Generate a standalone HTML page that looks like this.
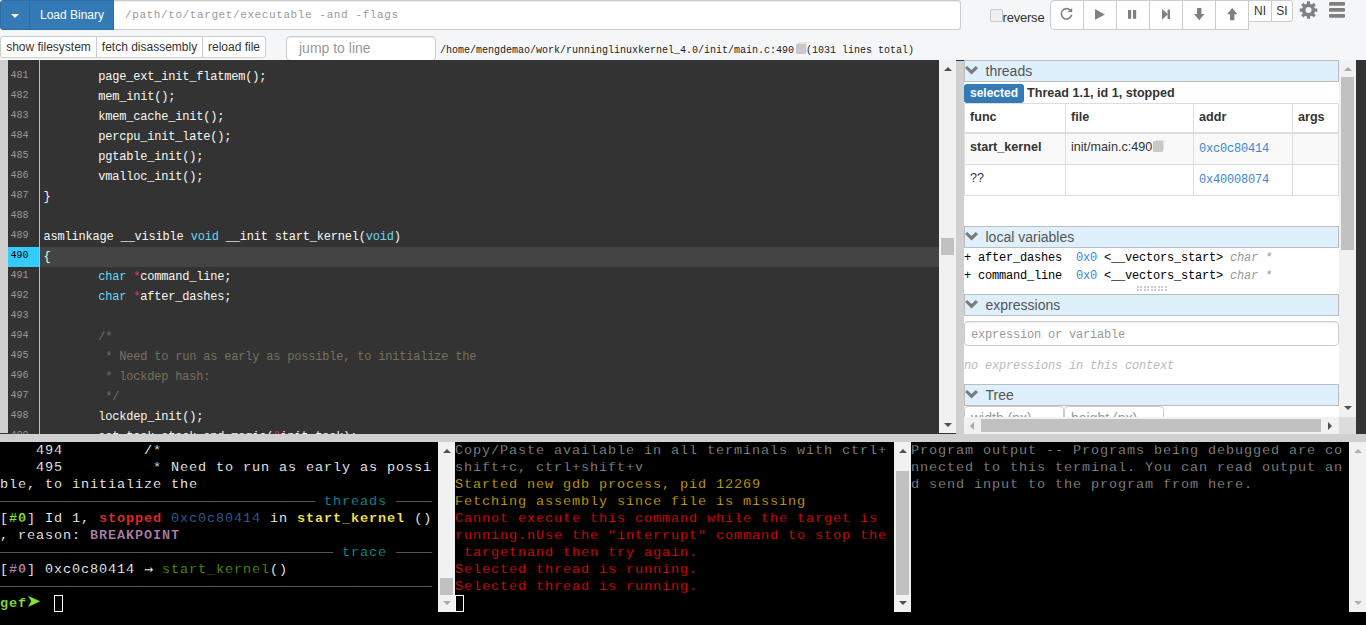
<!DOCTYPE html>
<html><head><meta charset="utf-8"><title>gdbgui</title>
<style>
*{box-sizing:border-box;margin:0;padding:0}
html,body{width:1366px;height:625px;overflow:hidden}
body{background:#f5f6f7;font-family:"Liberation Sans",sans-serif;font-size:14px;color:#333;position:relative}
.abs{position:absolute}
.mono{font-family:"Liberation Mono",monospace}
.btn{position:absolute;background:#fff;border:1px solid #ccc;color:#333;font-size:12px;text-align:center;white-space:nowrap}
/* top bar */
#ddl{left:0;top:0;width:30px;height:30px;background:#337ab7;border:1px solid #2e6da4;border-radius:3px 0 0 3px}
#ddl i{position:absolute;left:10px;top:13px;border-left:4px solid transparent;border-right:4px solid transparent;border-top:4px solid #fff}
#load{left:29px;top:0;width:85px;height:30px;background:#337ab7;border:1px solid #2e6da4;color:#fff;font-size:12px;line-height:28px;text-align:center;padding-left:1px}
#binput{left:114px;top:0;width:847px;height:30px;background:#fff;border:1px solid #ccc;border-left:0;border-radius:0 3px 3px 0;box-shadow:inset 0 1px 1px rgba(0,0,0,.075);font-size:11px;letter-spacing:0.6px;line-height:29px;padding-left:11px;color:#9a9a9a}
#rev{left:1002.5px;top:10px;font-size:13px;line-height:16px;color:#333;letter-spacing:-0.2px}
#chk{left:990px;top:9px;width:13px;height:13px;border:1px solid #c8c8c8;border-radius:2px;background:#f0f0f0}
.cb{top:0;height:30px;width:34px;border-radius:0}
.cb svg{position:absolute;left:0;top:0}
.xs{top:0;height:22px;line-height:20px;font-size:12px}
/* row 2 */
.b2{top:36px;height:22px;line-height:20px}
#jump{left:286px;top:36px;width:150px;height:25px;background:#fff;border:1px solid #ccc;border-radius:4px;box-shadow:inset 0 1px 1px rgba(0,0,0,.075);font-size:14px;line-height:23px;padding-left:12px;color:#999}
#path{left:440px;top:43px;font-size:10px;line-height:16px;color:#222;white-space:pre}
/* code */
#code{left:0;top:60px;width:1366px;height:373.5px;background:#333;overflow:hidden}
#lstrip{left:0;top:0;width:8px;height:373px;background:#d0d0d0}
.row{position:absolute;left:8px;width:931px;height:20px}
.row.cur{background:#444}
.ln{position:absolute;left:0;top:0;width:32px;height:20px;font-size:10px;color:#999;line-height:18.6px;padding-left:2.5px;border-right:1px solid #bbb}
.cur .ln{background:#3cf;color:#000}
.cl{position:absolute;left:35.6px;top:0.4px;height:20px;line-height:20px;font-size:12px;letter-spacing:-0.2px;color:#f8f8f2;white-space:pre}
.tab{letter-spacing:-0.38px}
.k{color:#66d9ef}.o{color:#f92672}.c{color:#75715e}
/* scrollbars */
.sb{position:absolute;background:#f1f1f1}
.thumb{position:absolute;background:#c1c1c1}
.arr{position:absolute;width:0;height:0;border:4px solid transparent}
.arr.u{border-bottom:4px solid #505050;border-top:0}
.arr.d{border-top:4px solid #505050;border-bottom:0}
.arr.l{border-right:4px solid #505050;border-left:0}
.arr.r{border-left:4px solid #505050;border-right:0}
/* right panel */
#gut1{left:956px;top:61px;width:8px;height:372.5px;background:#d0d0d0}
#panel{left:964px;top:60px;width:375px;height:357px;background:#fff;overflow:hidden}
.hdr{position:absolute;left:0;width:375px;height:22px;background:#dff0fd;border:1px solid #bcbcbc;font-size:14px;line-height:20px;color:#555;padding-left:20.5px}
.hdr svg{position:absolute;left:0;top:4.5px}
#sel{left:0;top:24px;width:60px;height:19px;background:#337ab7;color:#fff;font-weight:bold;font-size:12px;line-height:19px;text-align:center;border-radius:3px}
#thr{left:63px;top:23px;font-weight:bold;font-size:12.6px;line-height:20px;color:#333}
table{position:absolute;left:0;top:43px;width:375px;border-collapse:collapse;font-size:12.6px}
td,th{border:1px solid #ddd;padding:3.5px 5px 5px;line-height:18px;text-align:left;vertical-align:top;height:31px;white-space:nowrap}
th{border-bottom:2px solid #ddd;height:29px}
tr.odd td{height:32px;padding-top:4px}
tr.odd td{background:#f9f9f9}
.addr{position:relative;top:1px;font-family:"Liberation Mono",monospace;font-size:12px;letter-spacing:-0.2px;color:#3a86d0}
.lv{position:absolute;left:0;font-family:"Liberation Mono",monospace;font-size:12px;letter-spacing:-0.2px;line-height:18px;color:#000;white-space:pre}
.lv b{font-weight:normal;color:#3a86d0}
.lv i{color:#999}
#expr{left:0;top:261px;width:375px;height:25px;border:1px solid #ccc;border-radius:4px;box-shadow:inset 0 1px 1px rgba(0,0,0,.075);font-size:12px;line-height:26px;padding-left:6px;color:#999;letter-spacing:-0.2px}
#noexp{left:0;top:297px;font-size:12px;letter-spacing:-0.2px;font-style:italic;color:#bbb;line-height:18px;white-space:pre}
.tin{position:absolute;top:346px;height:25px;width:100px;border:1px solid #ccc;border-radius:4px;font-size:14px;color:#999;padding-left:6px;line-height:23px;background:#fff}
/* terminals */
#gut2{left:0;top:433.5px;width:1366px;height:8.5px;background:#d0d0d0}
.term{position:absolute;top:442px;height:183px;background:#000;font-family:"Liberation Mono",monospace;font-size:13.5px;letter-spacing:0.9px;line-height:17px;color:#fff;overflow:hidden;-webkit-text-stroke:0.25px #000}
.term div{height:17px;white-space:pre}
.g{color:#9c9c9c}.y{color:#e6bc00}.r{color:#ff0a0a}
.ln2{color:#555753;position:relative;top:1px;-webkit-text-stroke:0;font-size:15px;letter-spacing:0;line-height:17px;vertical-align:top;display:inline-block;height:17px}.cy{color:#06989a}.bg{color:#8ae234}.br{color:#ef2929}.bl{color:#3465a4}.by{color:#fce94f}.bm{color:#ad7fa8}.mg{color:#75507b}.gr{color:#4e9a06}
.cur2{display:inline-block;width:9px;height:17px;border:1px solid #fff;vertical-align:top}
.cp{display:inline-block;position:relative;width:11px;height:12px;vertical-align:-1px;margin-left:1px}.cp:before{content:'';position:absolute;left:2px;top:0;width:9px;height:10.5px;background:#dedede;border-radius:1px}.cp i{position:absolute;left:0;top:1.5px;width:9.5px;height:10.5px;background:#c9c9c9;border-radius:1px}
.arw{position:absolute;left:26px;top:-3px;font-family:"DejaVu Sans",sans-serif;font-size:18px;line-height:17px;color:#8ae234;font-weight:normal}
.dj{font-family:"DejaVu Sans Mono",monospace;font-size:15px;display:inline-block;width:9px;line-height:17px;vertical-align:top;height:17px;overflow:visible}
.lt{-webkit-text-stroke:0.15px #000}
</style></head><body>
<!-- top bar -->
<div id="ddl" class="abs"><i></i></div>
<div id="load" class="abs">Load Binary</div>
<div id="binput" class="abs mono">/path/to/target/executable -and -flags</div>
<div id="chk" class="abs"></div><div id="rev" class="abs">reverse</div>
<div class="btn cb" style="left:1050px;border-radius:4px 0 0 4px"></div>
<div class="btn cb" style="left:1083px"></div>
<div class="btn cb" style="left:1116px"></div>
<div class="btn cb" style="left:1149px"></div>
<div class="btn cb" style="left:1182px"></div>
<div class="btn cb" style="left:1215px"></div>
<div class="btn xs" style="left:1248px;width:24px">NI</div>
<div class="btn xs" style="left:1271px;width:22px;border-radius:0 3px 3px 0">SI</div>
<svg class="abs" style="left:0;top:0" width="1366" height="32" viewBox="0 0 1366 32" fill="#808080">
<path d="M1071.65 14.52 A5.2 5.2 0 1 1 1070.36 10.32" fill="none" stroke="#808080" stroke-width="1.6"/>
<path d="M1067.3 12.3 L1072.2 11.9 L1072.2 7.9 Z"/>
<path d="M1095 9 L1105 14.4 L1095 19.8 Z"/>
<rect x="1128" y="10" width="3.2" height="8.8"/><rect x="1133" y="10" width="3.2" height="8.8"/>
<path d="M1162 9 L1168 14.3 L1162 19.7 Z"/><rect x="1167.6" y="9.6" width="2.4" height="9.4"/>
<path d="M1197 8 H1201.4 V14 H1204.4 L1199.2 20.2 L1194 14 H1197 Z"/>
<path d="M1230 20.2 H1234.4 V14.2 H1237.4 L1232.2 8 L1227 14.2 H1230 Z"/>
<path fill-rule="evenodd" d="M1314.92 8.56 L1317.27 8.57 L1317.27 11.63 L1314.92 11.64 L1314.13 13.55 L1315.78 15.22 L1313.62 17.38 L1311.95 15.73 L1310.04 16.52 L1310.03 18.87 L1306.97 18.87 L1306.96 16.52 L1305.05 15.73 L1303.38 17.38 L1301.22 15.22 L1302.87 13.55 L1302.08 11.64 L1299.73 11.63 L1299.73 8.57 L1302.08 8.56 L1302.87 6.65 L1301.22 4.98 L1303.38 2.82 L1305.05 4.47 L1306.96 3.68 L1306.97 1.33 L1310.03 1.33 L1310.04 3.68 L1311.95 4.47 L1313.62 2.82 L1315.78 4.98 L1314.13 6.65Z M1305.50 10.10 a3.0 3.0 0 1 0 6.0 0 a3.0 3.0 0 1 0 -6.0 0Z"/>
<rect x="1329" y="1.9" width="16" height="3.8" rx="1"/><rect x="1329" y="7.9" width="16" height="3.8" rx="1"/><rect x="1329" y="13.9" width="16" height="3.8" rx="1"/>
</svg>
<!-- row 2 -->
<div class="btn b2" style="left:0;width:97px;border-radius:3px 0 0 3px">show filesystem</div>
<div class="btn b2" style="left:96px;width:107px">fetch disassembly</div>
<div class="btn b2" style="left:202px;width:64px;border-radius:0 3px 3px 0">reload file</div>
<div id="jump" class="abs">jump to line</div>
<div id="path" class="abs mono">/home/mengdemao/work/runninglinuxkernel_4.0/init/main.c:490  (1031 lines total)</div>
<div class="abs" style="left:798px;top:42px;width:9px;height:11px;background:#e2e4e6;border-radius:1px"></div><div class="abs" style="left:796px;top:43.5px;width:9.5px;height:10.5px;background:#c9c9c9;border-radius:1px"></div>
<!-- code -->
<div id="code" class="abs mono">
<div id="lstrip" class="abs"></div>
<div class="row" style="top:-13px"><span class="ln">480</span><span class="cl"><span class="c"><span class="tab">        </span> */</span></span></div>
<div class="row" style="top:7px"><span class="ln">481</span><span class="cl"><span class="tab">        </span>page_ext_init_flatmem();</span></div>
<div class="row" style="top:27px"><span class="ln">482</span><span class="cl"><span class="tab">        </span>mem_init();</span></div>
<div class="row" style="top:47px"><span class="ln">483</span><span class="cl"><span class="tab">        </span>kmem_cache_init();</span></div>
<div class="row" style="top:67px"><span class="ln">484</span><span class="cl"><span class="tab">        </span>percpu_init_late();</span></div>
<div class="row" style="top:87px"><span class="ln">485</span><span class="cl"><span class="tab">        </span>pgtable_init();</span></div>
<div class="row" style="top:107px"><span class="ln">486</span><span class="cl"><span class="tab">        </span>vmalloc_init();</span></div>
<div class="row" style="top:127px"><span class="ln">487</span><span class="cl">}</span></div>
<div class="row" style="top:147px"><span class="ln">488</span><span class="cl"></span></div>
<div class="row" style="top:167px"><span class="ln">489</span><span class="cl">asmlinkage __visible <span class="k">void</span> __init start_kernel(<span class="k">void</span>)</span></div>
<div class="row cur" style="top:187px"><span class="ln">490</span><span class="cl">{</span></div>
<div class="row" style="top:207px"><span class="ln">491</span><span class="cl"><span class="tab">        </span><span class="k">char</span> <span class="o">*</span>command_line;</span></div>
<div class="row" style="top:227px"><span class="ln">492</span><span class="cl"><span class="tab">        </span><span class="k">char</span> <span class="o">*</span>after_dashes;</span></div>
<div class="row" style="top:247px"><span class="ln">493</span><span class="cl"></span></div>
<div class="row" style="top:267px"><span class="ln">494</span><span class="cl"><span class="tab">        </span><span class="c">/*</span></span></div>
<div class="row" style="top:287px"><span class="ln">495</span><span class="cl"><span class="c"><span class="tab">        </span> * Need to run as early as possible, to initialize the</span></span></div>
<div class="row" style="top:307px"><span class="ln">496</span><span class="cl"><span class="c"><span class="tab">        </span> * lockdep hash:</span></span></div>
<div class="row" style="top:327px"><span class="ln">497</span><span class="cl"><span class="c"><span class="tab">        </span> */</span></span></div>
<div class="row" style="top:347px"><span class="ln">498</span><span class="cl"><span class="tab">        </span>lockdep_init();</span></div>
<div class="row" style="top:367px"><span class="ln">499</span><span class="cl"><span class="tab">        </span>set_task_stack_end_magic(<span class="o">&amp;</span>init_task);</span></div>
<div class="sb" style="left:939px;top:0;width:17px;height:373px"><i class="arr u" style="left:4.5px;top:7px"></i><i class="arr d" style="left:4.5px;top:363px"></i><div class="thumb" style="left:2px;top:178px;width:13px;height:17px"></div></div>
</div>
<!-- right panel -->
<div id="gut1" class="abs"></div>
<div id="panel" class="abs">
 <div class="hdr" style="top:0"><svg width="14" height="10" viewBox="0 0 14 10"><path d="M0.1 2.1 L2.1 0.1 L6.55 3.9 L10.8 0.1 L13 2.3 L6.55 8.5 Z" fill="#7b7b7b"/></svg>threads</div>
 <div id="sel" class="abs">selected</div><div id="thr" class="abs">Thread 1.1, id 1, stopped</div>
 <table>
  <tr><th style="width:101px">func</th><th style="width:128px">file</th><th style="width:99px">addr</th><th>args</th></tr>
  <tr class="odd"><td><b>start_kernel</b></td><td>init/main.c:490<span class="cp"><i></i></span></td><td><span class="addr">0xc0c80414</span></td><td></td></tr>
  <tr><td>??</td><td></td><td><span class="addr">0x40008074</span></td><td></td></tr>
 </table>
 <div class="hdr" style="top:166px"><svg width="14" height="10" viewBox="0 0 14 10"><path d="M0.1 2.1 L2.1 0.1 L6.55 3.9 L10.8 0.1 L13 2.3 L6.55 8.5 Z" fill="#7b7b7b"/></svg>local variables</div>
 <div class="lv" style="top:189px">+ after_dashes  <b>0x0</b> &lt;__vectors_start&gt; <i>char *</i></div>
 <div class="lv" style="top:207px">+ command_line  <b>0x0</b> &lt;__vectors_start&gt; <i>char *</i></div>
 <div class="abs" style="left:172.5px;top:226px;width:31px;height:4.6px;background:repeating-linear-gradient(90deg,#ccc 0,#ccc 2px,transparent 2px,transparent 3.45px);"></div><div class="abs" style="left:172px;top:227.6px;width:32px;height:1.2px;background:#fff"></div>
 <div class="hdr" style="top:234px"><svg width="14" height="10" viewBox="0 0 14 10"><path d="M0.1 2.1 L2.1 0.1 L6.55 3.9 L10.8 0.1 L13 2.3 L6.55 8.5 Z" fill="#7b7b7b"/></svg>expressions</div>
 <div id="expr" class="abs mono">expression or variable</div>
 <div id="noexp" class="abs mono">no expressions in this context</div>
 <div class="hdr" style="top:324px"><svg width="14" height="10" viewBox="0 0 14 10"><path d="M0.1 2.1 L2.1 0.1 L6.55 3.9 L10.8 0.1 L13 2.3 L6.55 8.5 Z" fill="#7b7b7b"/></svg>Tree</div>
 <div class="tin" style="left:0">width (px)</div><div class="tin" style="left:100px">height (px)</div>
</div>
<div class="sb" style="left:1339px;top:60px;width:17px;height:357px"><i class="arr u" style="left:5px;top:7px;opacity:.45"></i><i class="arr d" style="left:5px;top:346px"></i><div class="thumb" style="left:2px;top:17px;width:13px;height:173px"></div></div>
<div class="sb" style="left:964px;top:417px;width:375px;height:16.5px"><i class="arr l" style="left:6px;top:5px;opacity:.45"></i><i class="arr r" style="left:364px;top:5px"></i><div class="thumb" style="left:17px;top:2px;width:340px;height:13px"></div></div>
<div class="abs" style="left:1339px;top:417px;width:17px;height:16.5px;background:#dcdcdc"></div>
<!-- terminals -->
<div id="gut2" class="abs"></div>
<div class="term" style="left:0;width:1366px"></div>
<div class="term lt" style="left:0;width:438px">
<div>    494         /*</div>
<div>    495          * Need to run as early as possi</div>
<div>ble, to initialize the</div>
<div><span class="ln2">───────────────────────────────────</span><span class="cy"> threads </span><span class="ln2">────</span></div>
<div>[<b class="bg">#0</b>] Id 1, <b class="br">stopped</b> <span class="bl">0xc0c80414</span> in <b class="by">start_kernel</b> ()</div>
<div>, reason: <b class="bm">BREAKPOINT</b></div>
<div><span class="ln2">─────────────────────────────────────</span><span class="cy"> trace </span><span class="ln2">────</span></div>
<div>[<b class="bm">#0</b>] 0xc0c80414 <span class="dj">→</span> <span class="gr">start_kernel</span>()</div>
<div><span class="ln2">────────────────────────────────────────────────</span></div>
<div style="position:relative"><b class="bg">gef</b><span class="arw">➤</span>   <span class="cur2"></span></div>
</div>
<div class="term" style="left:455px;width:439px">
<div class="g">Copy/Paste available in all terminals with ctrl+</div>
<div class="g">shift+c, ctrl+shift+v</div>
<div class="y">Started new gdb process, pid 12269</div>
<div class="y">Fetching assembly since file is missing</div>
<div class="r">Cannot execute this command while the target is</div>
<div class="r">running.nUse the "interrupt" command to stop the</div>
<div class="r"> targetnand then try again.</div>
<div class="r">Selected thread is running.</div>
<div class="r">Selected thread is running.</div>
<div><span class="cur2"></span></div>
</div>
<div class="term" style="left:911px;width:438px">
<div class="g">Program output -- Programs being debugged are co</div>
<div class="g">nnected to this terminal. You can read output an</div>
<div class="g">d send input to the program from here.</div>
</div>
<div class="sb" style="left:438px;top:442px;width:17px;height:170px"><i class="arr u" style="left:4.5px;top:7px"></i><i class="arr d" style="left:4.5px;top:159px;opacity:.45"></i><div class="thumb" style="left:2px;top:136px;width:13px;height:17px"></div></div>
<div class="sb" style="left:894px;top:442px;width:17px;height:170px"><i class="arr u" style="left:4.5px;top:7px"></i><i class="arr d" style="left:4.5px;top:159px"></i><div class="thumb" style="left:2px;top:29px;width:13px;height:124px"></div></div>
<div class="sb" style="left:1349px;top:442px;width:17px;height:170px"><i class="arr u" style="left:4.5px;top:7px;opacity:.4"></i><i class="arr d" style="left:4.5px;top:159px;opacity:.4"></i></div>
</body></html>
